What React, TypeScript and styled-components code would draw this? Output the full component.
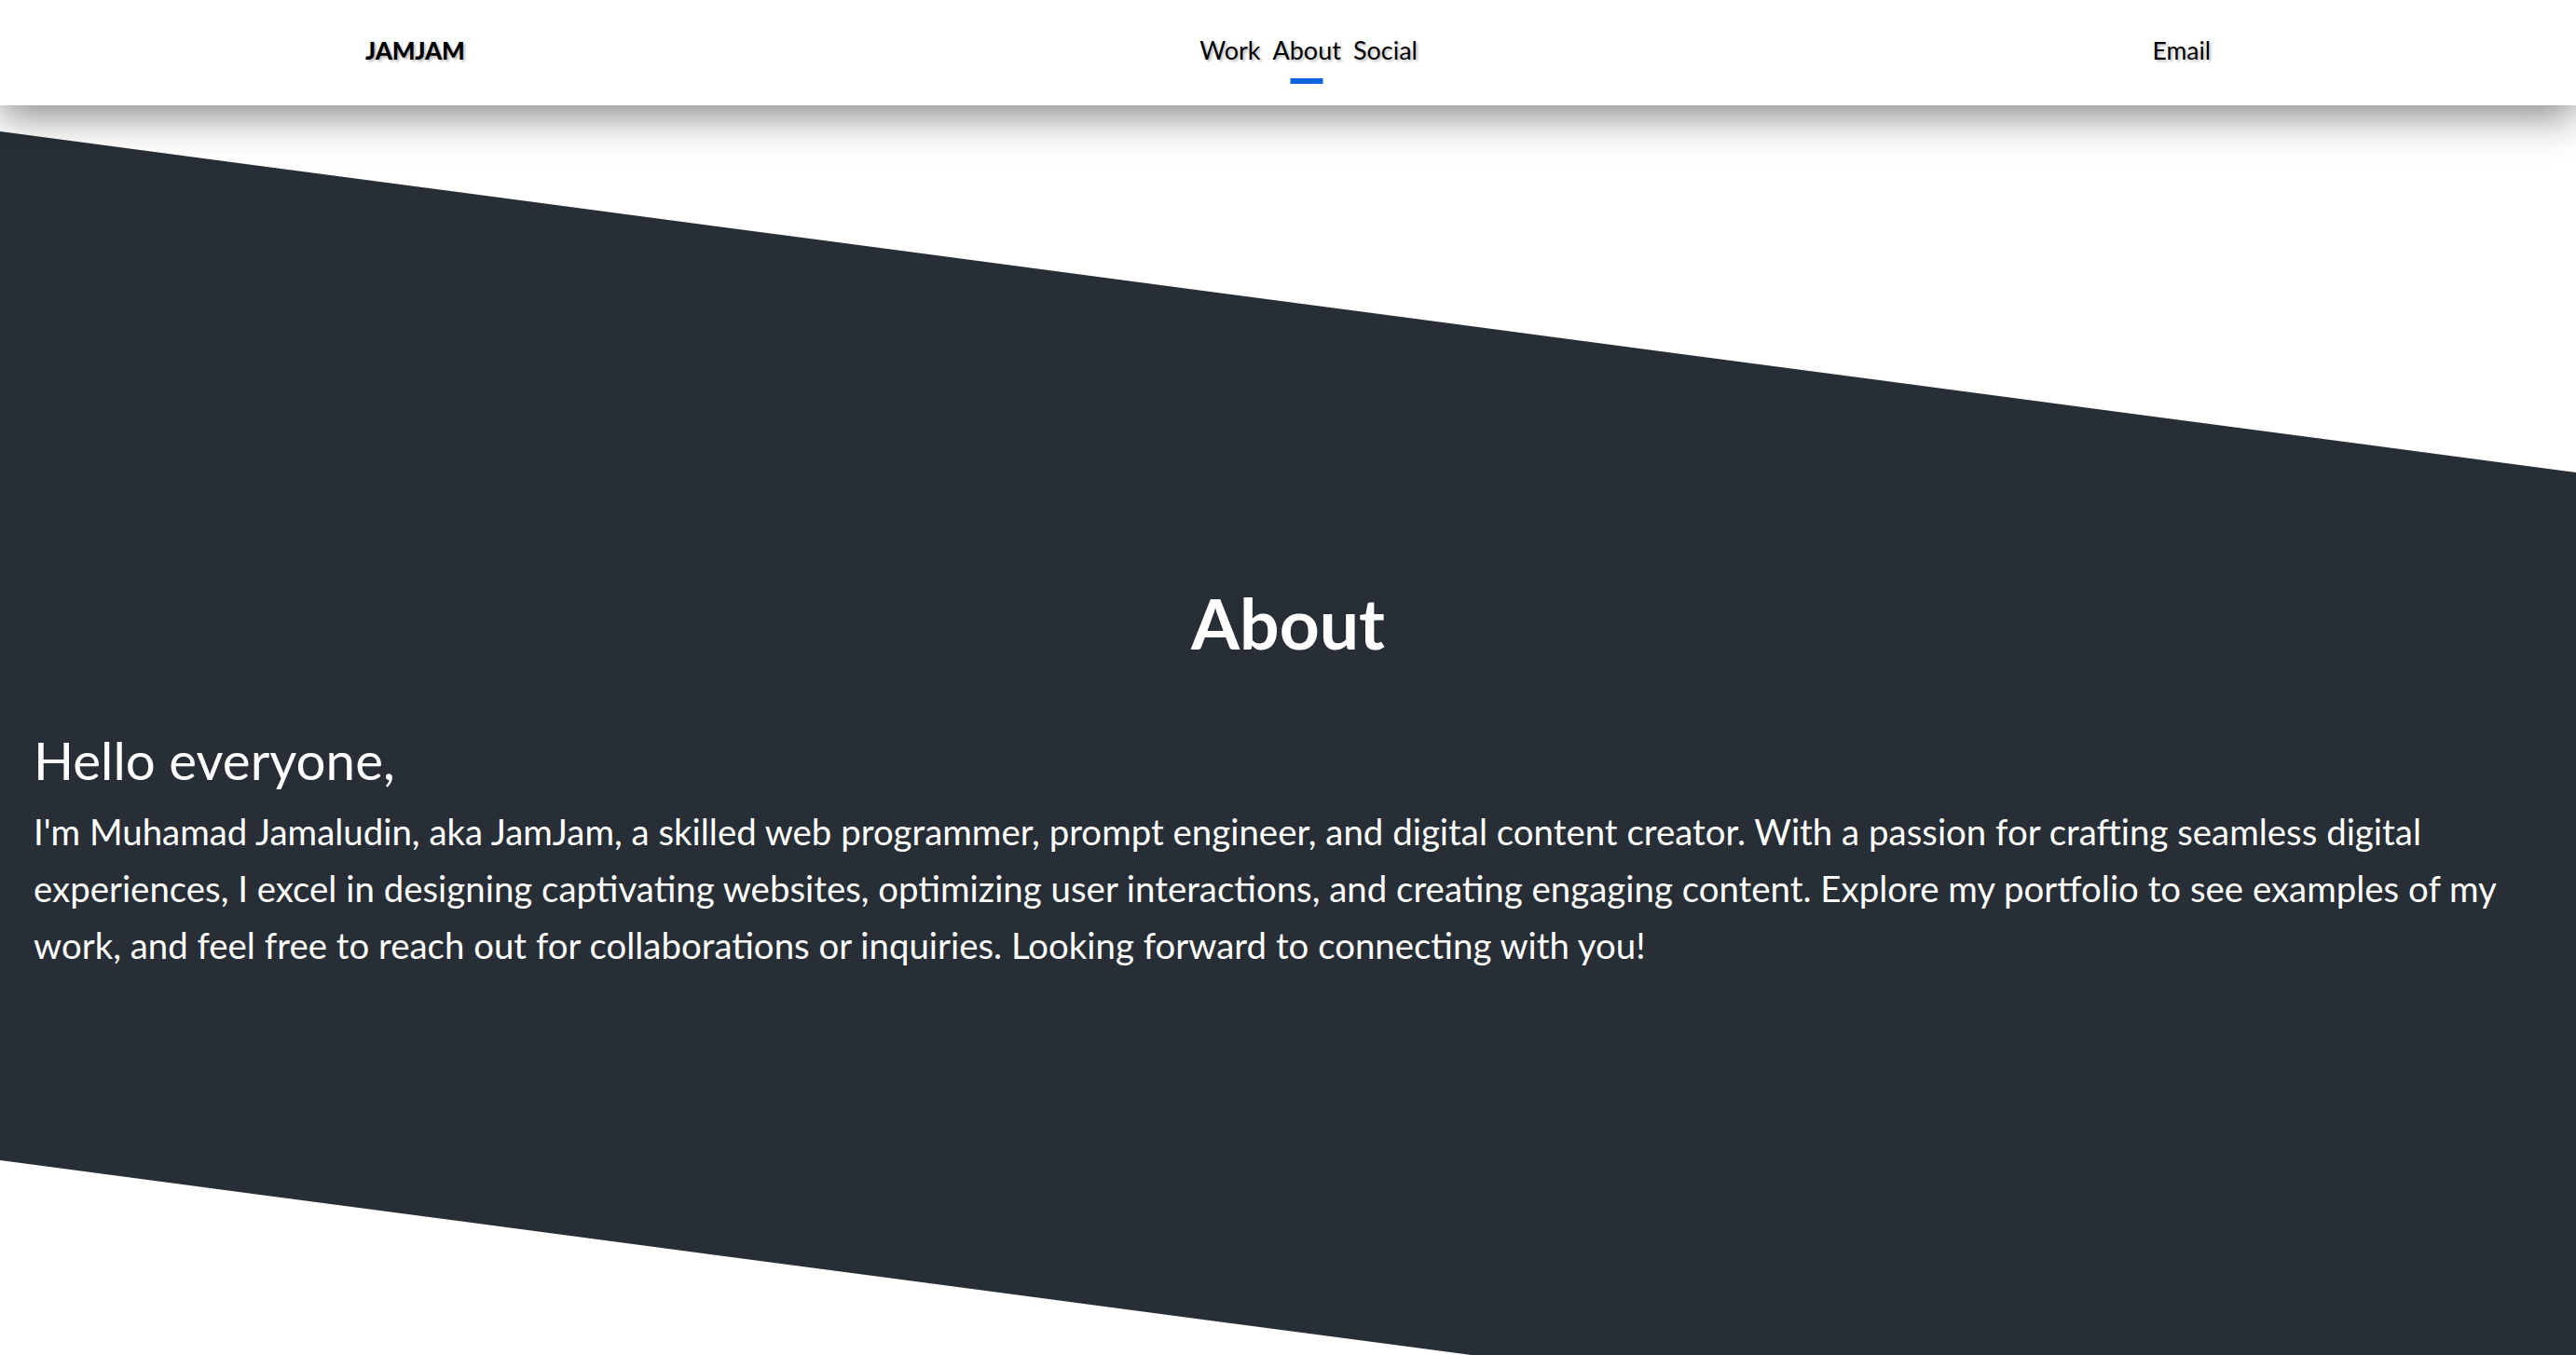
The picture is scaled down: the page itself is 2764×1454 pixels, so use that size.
import React from "react";
import styled, { createGlobalStyle } from "styled-components";

const GlobalStyle = createGlobalStyle`
  html, body {
    margin: 0;
    padding: 0;
    background: #ffffff;
    font-family: Lato, "Open Sans", sans-serif;
    overflow-x: hidden;
  }
  * { box-sizing: border-box; }
`;

const Header = styled.header`
  position: relative;
  z-index: 2;
  height: 113px;
  background: #ffffff;
  box-shadow: 0 10px 45px rgba(0, 0, 0, 0.5);
  display: flex;
  align-items: center;
  padding-bottom: 4px;
`;

const HeaderInner = styled.div`
  width: 100%;
  max-width: 1980px;
  margin: 0 auto;
  display: flex;
  align-items: center;
  justify-content: space-between;
`;

const Logo = styled.a`
  font-size: 26px;
  font-weight: 900;
  line-height: 1.2;
  color: #000;
  text-decoration: none;
  text-shadow: 2px 2px 3px rgba(0, 0, 0, 0.28);
  letter-spacing: -0.2px;
`;

const Nav = styled.nav`
  display: flex;
  align-items: center;
  gap: 13px;
`;

const NavLink = styled.a<{ $active?: boolean }>`
  position: relative;
  font-size: 27px;
  line-height: 1.2;
  color: #000;
  text-decoration: none;
  text-shadow: 2px 2px 3px rgba(0, 0, 0, 0.28);

  &::after {
    content: "";
    display: ${(p) => (p.$active ? "block" : "none")};
    position: absolute;
    left: 50%;
    top: calc(100% + 13px);
    width: 35px;
    height: 6px;
    transform: translateX(-50%);
    background: #0e63df;
  }
`;

const EmailLink = styled.a`
  font-size: 26.5px;
  line-height: 1.2;
  color: #000;
  text-decoration: none;
  text-shadow: 2px 2px 3px rgba(0, 0, 0, 0.28);
`;

const AboutSection = styled.section`
  margin-top: 28px;
  height: 1470px;
  background: #272e35;
  clip-path: polygon(0 0, 100% 13.24vw, 100% 100%, 0 calc(100% - 13.24vw));
  padding: 482px 36px 0;
  color: #ffffff;
`;

const Title = styled.h1`
  margin: 0 0 66px;
  text-align: center;
  font-size: 75px;
  font-weight: 700;
  line-height: 1.2;
`;

const Greeting = styled.h2`
  margin: 0 0 11px;
  font-size: 56.5px;
  font-weight: 400;
  line-height: 72px;
`;

const Paragraph = styled.p`
  margin: 0;
  font-size: 38.4px;
  line-height: 61px;
  font-weight: 400;
`;

export default function App() {
  return (
    <>
      <GlobalStyle />
      <Header>
        <HeaderInner>
          <Logo href="#">JAMJAM</Logo>
          <Nav>
            <NavLink href="#">Work</NavLink>
            <NavLink href="#" $active>
              About
            </NavLink>
            <NavLink href="#">Social</NavLink>
          </Nav>
          <EmailLink href="#">Email</EmailLink>
        </HeaderInner>
      </Header>
      <AboutSection>
        <Title>About</Title>
        <Greeting>Hello everyone,</Greeting>
        <Paragraph>
          I'm Muhamad Jamaludin, aka JamJam, a skilled web programmer, prompt
          engineer, and digital content creator. With a passion for crafting
          seamless digital experiences, I excel in designing captivating
          websites, optimizing user interactions, and creating engaging content.
          Explore my portfolio to see examples of my work, and feel free to
          reach out for collaborations or inquiries. Looking forward to
          connecting with you!
        </Paragraph>
      </AboutSection>
    </>
  );
}
